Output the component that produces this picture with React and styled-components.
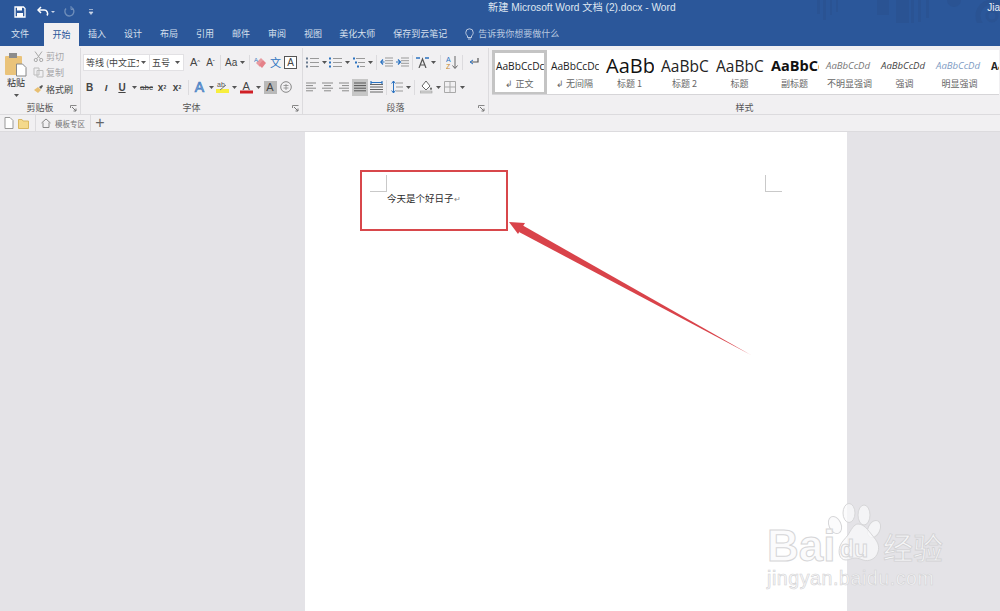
import React from "react";
import styled, { createGlobalStyle } from "styled-components";

const Global = createGlobalStyle`
  html, body { margin: 0; padding: 0; }
  body { font-family: "Liberation Sans", "Noto Sans CJK SC", sans-serif; overflow: hidden; }
`;

const CJK = `"Noto Sans CJK SC", "Liberation Sans", sans-serif`;

const Page = styled.div`
  position: relative;
  width: 1000px;
  height: 611px;
  display: flex;
  flex-direction: column;
  overflow: hidden;
  background: #e4e3e7;
`;

const TitleBar = styled.div`
  position: relative;
  height: 23px;
  display: flex;
  align-items: center;
  background: #2b579a;
  color: #dfe6f1;
`;

const Quick = styled.div`
  display: flex;
  align-items: center;
  padding-left: 14px;
  width: 300px;
`;

const Title = styled.div`
  position: absolute;
  left: 488px;
  top: 1px;
  font: 10.2px/14px "Liberation Sans", "Noto Sans CJK SC", sans-serif;
  white-space: nowrap;
`;

const UserName = styled.div`
  position: absolute;
  right: 0;
  top: 1px;
  font-size: 10px;
  line-height: 14px;
  color: #e8edf5;
`;

const Decor = styled.svg`
  position: absolute;
  right: 0;
  top: 0;
`;

const Tabs = styled.div`
  height: 23px;
  display: flex;
  align-items: center;
  background: #2b579a;
  padding-left: 11px;
  font: 9px/12px ${CJK};
  color: #d7e0ee;
`;

const Tab = styled.div`
  margin-left: ${(p) => p.$ml}px;
  margin-top: -2px;
  white-space: nowrap;
  ${(p) => p.$active && `
    background: #f1f0f2;
    color: #2b579a;
    height: 25px;
    margin-top: 0;
    width: 35px;
    display: flex;
    align-items: center;
    justify-content: center;
  `}
`;

const Tell = styled.div`
  margin-left: 18px;
  margin-top: -2px;
  display: flex;
  align-items: center;
  gap: 4px;
  color: #b9c9e0;
`;

const Ribbon = styled.div`
  height: 69px;
  display: flex;
  background: #f1f0f2;
  border-bottom: 1px solid #dcdbde;
  box-sizing: border-box;
  font-family: ${CJK};
  color: #444;
`;

const Group = styled.div`
  position: relative;
  width: ${(p) => p.$w}px;
  flex: none;
  display: flex;
  flex-direction: column;
  border-right: ${(p) => (p.$last ? "none" : "1px solid #dcdbde")};
  box-sizing: border-box;
  margin: 2px 0 0;
`;

const GroupBody = styled.div`
  height: 52px;
  display: flex;
  flex-direction: ${(p) => (p.$row ? "row" : "column")};
`;

const GroupLabel = styled.div`
  font-size: 9px;
  line-height: 12px;
  text-align: center;
  color: #555;
  padding-top: ${(p) => p.$top || 3}px;
`;

const Launcher = styled.svg`
  position: absolute;
  right: 3px;
  bottom: 2px;
`;

const PasteBtn = styled.div`
  width: 26px;
  padding: 4px 0 0 3px;
  display: flex;
  flex-direction: column;
  align-items: center;
  font-size: 9px;
  line-height: 12px;
  color: #333;
`;

const PasteCaret = styled.div`
  margin-top: 3px;
  line-height: 3px;
`;

const ClipList = styled.div`
  display: flex;
  flex-direction: column;
  padding-left: 4px;
`;

const ClipRow = styled.div`
  height: 16.5px;
  display: flex;
  align-items: center;
  gap: 2px;
  font-size: 9px;
  color: ${(p) => (p.$dim ? "#a5a5a8" : "#444")};
`;

const ToolRow = styled.div`
  display: flex;
  align-items: center;
  height: ${(p) => p.$h || 25}px;
  padding-left: ${(p) => p.$pl || 0}px;
`;

const FontSelect = styled.div`
  width: ${(p) => p.$w}px;
  height: 17px;
  box-sizing: border-box;
  background: #fff;
  border: 1px solid #e2e1e4;
  border-left-width: ${(p) => (p.$join ? 0 : 1)}px;
  display: flex;
  align-items: center;
  justify-content: space-between;
  padding: 0 3px 0 2px;
  font-size: 9px;
  color: #444;
  white-space: nowrap;
  overflow: hidden;
`;

const SelectText = styled.span`
  flex: 1;
  overflow: hidden;
  margin-right: 2px;
`;

const Tool = styled.div`
  width: ${(p) => p.$w || 16}px;
  height: 17px;
  flex: none;
  display: flex;
  align-items: center;
  justify-content: center;
  font-family: "Liberation Sans", sans-serif;
  font-size: ${(p) => p.$size || 10}px;
  font-weight: ${(p) => (p.$bold ? 700 : 400)};
  font-style: ${(p) => (p.$italic ? "italic" : "normal")};
  color: ${(p) => p.$color || "#444"};
  background: ${(p) => (p.$on ? "#c6c6c6" : "transparent")};
  white-space: nowrap;
`;

const Sep = styled.div`
  width: 1px;
  height: 15px;
  background: #dcdbde;
  margin: 0 ${(p) => p.$m || 3}px;
  flex: none;
`;

const FramedA = styled.div`
  width: 13px;
  height: 13px;
  box-sizing: border-box;
  border: 1px solid #555;
  background: #fff;
  font-size: 10px;
  line-height: 11px;
  text-align: center;
  color: #444;
`;

const ShadeA = styled.div`
  width: 13px;
  height: 13px;
  background: #b9b9b9;
  font-size: 11px;
  line-height: 13px;
  text-align: center;
  color: #444;
`;

const Gallery = styled.div`
  margin: 2px 0 0 3px;
  height: 46px;
  width: 507px;
  display: flex;
  background: #fff;
  border-bottom: 1px solid #d6d5d8;
  overflow: hidden;
`;

const StyleItem = styled.div`
  width: 55px;
  flex: none;
  box-sizing: border-box;
  height: 45px;
  border: ${(p) => (p.$sel ? "3px solid #c4c4c4" : "3px solid transparent")};
  display: flex;
  flex-direction: column;
  align-items: center;
  overflow: hidden;
`;

const Sample = styled.div`
  width: 49px;
  height: 25px;
  padding-left: 1px;
  box-sizing: border-box;
  display: flex;
  align-items: center;
  overflow: hidden;
  white-space: nowrap;
  font-family: "Open Sans", "Liberation Sans", sans-serif;
  font-size: ${(p) => p.$size || 10}px;
  font-weight: ${(p) => (p.$bold ? 700 : 400)};
  font-style: ${(p) => (p.$italic ? "italic" : "normal")};
  color: ${(p) => p.$color || "#222"};
`;

const StyleName = styled.div`
  font-size: 9px;
  line-height: 12px;
  color: #666;
  white-space: nowrap;
`;

const DocBar = styled.div`
  height: 17px;
  display: flex;
  align-items: center;
  background: #f1f0f2;
  border-bottom: 1px solid #dcdbde;
  box-sizing: border-box;
  padding-left: 4px;
  font-family: ${CJK};
`;

const FolderIcon = styled.svg`
  margin-left: 4px;
`;

const DocTab = styled.div`
  display: flex;
  align-items: center;
  gap: 4px;
  height: 16px;
  width: 56px;
  box-sizing: border-box;
  padding-left: 5px;
  margin-left: 6px;
  border-left: 1px solid #dcdbde;
  border-right: 1px solid #dcdbde;
  font-size: 7.5px;
  color: #777;
  white-space: nowrap;
`;

const Work = styled.div`
  flex: 1;
  display: flex;
  padding-left: 305px;
`;

const Sheet = styled.div`
  width: 542px;
  background: #fff;
  box-sizing: border-box;
  padding: 43px 65px 0;
  font-family: ${CJK};
`;

const Crops = styled.div`
  display: flex;
  justify-content: space-between;
`;

const Crop = styled.div`
  width: 16px;
  height: 16px;
  border-bottom: 1px solid #c9c9c9;
  ${(p) => (p.$right ? "border-left: 1px solid #c9c9c9;" : "border-right: 1px solid #c9c9c9;")}
`;

const Para = styled.div`
  margin: 0 0 0 17px;
  font-size: 9.5px;
  line-height: 13px;
  color: #2c2c2c;
`;

const ReturnMark = styled.span`
  color: #888;
  font-size: 8px;
`;

const RedBox = styled.div`
  position: absolute;
  left: 360px;
  top: 170px;
  width: 148px;
  height: 61px;
  box-sizing: border-box;
  border: 2px solid #d8474b;
`;

const Overlay = styled.svg`
  position: absolute;
  left: 0;
  top: 0;
  pointer-events: none;
`;

const Watermark = styled.div`
  position: absolute;
  left: 767px;
  top: 525px;
`;

const BaiRow = styled.div`
  display: flex;
  align-items: center;
  height: 42px;
`;

const BaiText = styled.div`
  width: 116px;
  font: 700 44px/42px "Liberation Sans", sans-serif;
  color: rgba(250, 250, 251, 0.75);
  -webkit-text-stroke: 1px #d6d6d8;
`;

const Jing = styled.div`
  font: 400 30px/42px ${CJK};
  color: rgba(250, 250, 251, 0.85);
  -webkit-text-stroke: 0.8px #d2d2d4;
`;

const Url = styled.div`
  font: 400 19.5px/22px "Liberation Sans", sans-serif;
  letter-spacing: 0.6px;
  color: rgba(250, 250, 251, 0.85);
  -webkit-text-stroke: 0.6px #d2d2d4;
`;

const Caret = ({ color = "#555" }) => (
  <svg width="5" height="3" viewBox="0 0 5 3"><path d="M0 0h5L2.5 3z" fill={color} /></svg>
);

const Lines = ({ kind }) => {
  // alignment glyphs, kind picks how the rows are cut
  const rows = {
    left: [[1, 11], [1, 8], [1, 11], [1, 8]],
    center: [[1, 12], [3, 10], [1, 12], [3, 10]],
    right: [[2, 12], [5, 12], [2, 12], [5, 12]],
    full: [[1, 13], [1, 13], [1, 13], [1, 13]],
  }[kind];
  return (
    <svg width="14" height="12" viewBox="0 0 14 12">
      {rows.map((r, i) => (
        <path key={i} d={`M${r[0]} ${2 + i * 2.6}H${r[1]}`} stroke={kind === "full" ? "#555" : "#8a8a8a"} />
      ))}
    </svg>
  );
};

const ListIcon = ({ color = "#2b72c0" }) => (
  <svg width="13" height="13" viewBox="0 0 13 13">
    <g fill={color}><rect x="0" y="1.5" width="2" height="2" /><rect x="0" y="5.5" width="2" height="2" /><rect x="0" y="9.5" width="2" height="2" /></g>
    <path d="M4 2.5h9M4 6.500h9M4 10.500h9" stroke="#999" />
  </svg>
);

const Launch = () => (
  <Launcher width="7" height="7" viewBox="0 0 7 7">
    <path d="M.5 3V.5H6.500" stroke="#888" fill="none" />
    <path d="M2 2l4 4M6 3.500V6H3.500" stroke="#777" fill="none" />
  </Launcher>
);

const styleItems = [
  { sample: "AaBbCcDc", name: "↲ 正文", size: 10.2, sel: true },
  { sample: "AaBbCcDc", name: "↲ 无间隔", size: 10.2 },
  { sample: "AaBbCc", name: "标题 1", size: 20, color: "#111" },
  { sample: "AaBbCc", name: "标题 2", size: 15.5 },
  { sample: "AaBbCc", name: "标题", size: 15.5 },
  { sample: "AaBbCc", name: "副标题", size: 14.5, bold: true, color: "#111" },
  { sample: "AaBbCcDd", name: "不明显强调", size: 9.6, italic: true, color: "#777" },
  { sample: "AaBbCcDd", name: "强调", size: 9.6, italic: true, color: "#444" },
  { sample: "AaBbCcDd", name: "明显强调", size: 9.6, italic: true, color: "#7e9cc4" },
  { sample: "Aa", name: "", size: 10, bold: true },
];

export default function App() {
  return (
    <Page>
      <Global />
      <TitleBar>
        <Decor width="190" height="23" viewBox="0 0 190 23">
          <g fill="#2a5393">
            <rect x="7" y="0" width="3" height="14" /><rect x="13" y="0" width="3" height="20" /><rect x="20" y="0" width="2" height="15" /><rect x="26" y="0" width="2" height="12" />
            <rect x="67" y="0" width="12" height="15" /><rect x="86" y="0" width="13" height="23" /><rect x="101" y="0" width="3" height="23" /><rect x="108" y="0" width="3" height="22" /><rect x="116" y="0" width="3" height="18" />
            <circle cx="144" cy="0" r="7" />
          </g>
          <circle cx="182" cy="16" r="14" fill="none" stroke="#2a5393" strokeWidth="5" />
          <circle cx="182" cy="16" r="5" fill="none" stroke="#2a5393" strokeWidth="3" />
        </Decor>
        <Quick>
          <svg width="12" height="12" viewBox="0 0 12 12"><path d="M1 1h8.500L11 2.500V11H1z" fill="none" stroke="#fff" strokeWidth="1.300" /><rect x="3" y="1" width="5" height="3.500" fill="#fff" /><rect x="3" y="7" width="6" height="4" fill="#fff" /></svg>
          <svg width="20" height="12" viewBox="0 0 20 12" style={{ marginLeft: 11 }}><path d="M4 1L1 4l3 3" fill="none" stroke="#fff" strokeWidth="1.500" /><path d="M1.500 4H7a3.500 3.500 0 0 1 3 5.500" fill="none" stroke="#fff" strokeWidth="1.500" /><path d="M14 5h4l-2 2z" fill="#cbd6e7" /></svg>
          <svg width="12" height="12" viewBox="0 0 12 12" style={{ marginLeft: 6 }}><path d="M8.500 1.500a4.500 4.500 0 1 1-5.500 1" fill="none" stroke="#6e8db9" strokeWidth="1.400" /><path d="M8 0v3.500h3" fill="none" stroke="#6e8db9" /></svg>
          <svg width="6" height="8" viewBox="0 0 6 8" style={{ marginLeft: 13 }}><path d="M1 1.500h4M1 4h4l-2 2.500L1 4" fill="#cbd6e7" stroke="#cbd6e7" strokeWidth=".7" /></svg>
        </Quick>
        <Title>新建 Microsoft Word 文档 (2).docx  -  Word</Title>
        <UserName>Jia</UserName>
      </TitleBar>

      <Tabs>
        <Tab>文件</Tab>
        <Tab $ml={15} $active>开始</Tab>
        <Tab $ml={9}>插入</Tab>
        <Tab $ml={18}>设计</Tab>
        <Tab $ml={18}>布局</Tab>
        <Tab $ml={18}>引用</Tab>
        <Tab $ml={18}>邮件</Tab>
        <Tab $ml={18}>审阅</Tab>
        <Tab $ml={18}>视图</Tab>
        <Tab $ml={17}>美化大师</Tab>
        <Tab $ml={18}>保存到云笔记</Tab>
        <Tell>
          <svg width="9" height="12" viewBox="0 0 9 12"><path d="M2.500 8C1.500 7 .8 6 .8 4.500a3.700 3.700 0 0 1 7.400 0C8.200 6 7.500 7 6.500 8v1.500h-4zM3 11h3" fill="none" stroke="#dfe6f1" strokeWidth=".8" /></svg>
          告诉我你想要做什么
        </Tell>
      </Tabs>

      <Ribbon>
        <Group $w={81}>
          <GroupBody $row>
            <PasteBtn>
              <svg width="22" height="25" viewBox="0 0 22 25">
                <rect x="0" y="4" width="17" height="19" rx="1" fill="#eac37a" />
                <rect x="4" y="1" width="8" height="5" fill="#8c8c8c" />
                <path d="M11.500 12h6l3.500 3.500V24h-9.500z" fill="#fff" stroke="#888" />
              </svg>
              <div>粘贴</div>
              <PasteCaret><Caret /></PasteCaret>
            </PasteBtn>
            <ClipList>
              <ClipRow $dim>
                <svg width="11" height="11" viewBox="0 0 11 11"><path d="M2 .5l5 7M9 .5l-5 7" stroke="#a8a8a8" fill="none" /><circle cx="2.800" cy="9" r="1.600" fill="none" stroke="#a8a8a8" /><circle cx="8.200" cy="9" r="1.600" fill="none" stroke="#a8a8a8" /></svg>
                剪切
              </ClipRow>
              <ClipRow $dim>
                <svg width="11" height="11" viewBox="0 0 11 11"><path d="M1 1h5v7H1zM4 3.500h6V10H4z" fill="#f1f0f2" stroke="#bdbdbd" /></svg>
                复制
              </ClipRow>
              <ClipRow>
                <svg width="11" height="11" viewBox="0 0 11 11"><path d="M1 6l4-3 3 3-3 3z" fill="#e8bf72" /><path d="M6 3l3-2 1 1-2 3z" fill="#555" /></svg>
                格式刷
              </ClipRow>
            </ClipList>
          </GroupBody>
          <GroupLabel>剪贴板</GroupLabel>
          <Launch />
        </Group>

        <Group $w={222}>
          <GroupBody>
            <ToolRow $h={28} $pl={2}>
              <FontSelect $w={67}><SelectText>等线 (中文正文)</SelectText><Caret /></FontSelect>
              <FontSelect $w={34} $join>五号<Caret /></FontSelect>
              <Tool $w={16} $size={11} style={{ marginLeft: 3 }}>A<sup style={{ fontSize: 6 }}>^</sup></Tool>
              <Tool $w={15} $size={10}>A<sup style={{ fontSize: 6 }}>ˇ</sup></Tool>
              <Sep $m={2} />
              <Tool $w={24} $size={10}>Aa&nbsp;<Caret /></Tool>
              <Sep $m={2} />
              <Tool $w={16}>
                <svg width="13" height="13" viewBox="0 0 13 13"><path d="M6 11L2 7l5-5 2 2z" fill="#e89aa0" /><path d="M8 12l4-5-3-3-4 5z" fill="#e58189" /><text x="0" y="6" fontSize="6" fill="#3d78bd">A</text></svg>
              </Tool>
              <Tool $w={15} $color="#2b72c0" style={{ fontFamily: CJK, fontSize: 11 }}>文</Tool>
              <Tool $w={15}><FramedA>A</FramedA></Tool>
            </ToolRow>
            <ToolRow $h={22} $pl={0}>
              <Tool $w={17} $bold>B</Tool>
              <Tool $w={16} $bold $italic $size={9.5}>I</Tool>
              <Tool $w={16} $bold style={{ textDecoration: "underline" }}>U</Tool>
              <Tool $w={8}><Caret /></Tool>
              <Tool $w={17} $size={8} style={{ textDecoration: "line-through" }}>abc</Tool>
              <Tool $w={14} $bold>x<sub style={{ fontSize: 5 }}>2</sub></Tool>
              <Tool $w={16} $bold>x<sup style={{ fontSize: 5 }}>2</sup></Tool>
              <Sep $m={3} />
              <Tool $w={15} $size={14} $color="#a9c7ea" style={{ WebkitTextStroke: "0.7px #3c78bf" }}>A</Tool>
              <Tool $w={8}><Caret /></Tool>
              <Tool $w={15}>
                <svg width="14" height="14" viewBox="0 0 14 14"><rect x="0" y="9" width="13" height="4" fill="#f7ee3e" /><text x="1" y="7" fontSize="7" fill="#555">ab</text><path d="M4 10l6-5" stroke="#777" /></svg>
              </Tool>
              <Tool $w={9}><Caret /></Tool>
              <Tool $w={15}>
                <svg width="14" height="14" viewBox="0 0 14 14"><text x="2.500" y="9.500" fontSize="11" fill="#444" fontFamily="Liberation Sans">A</text><rect x="0" y="10.500" width="13" height="3" fill="#d01f26" /></svg>
              </Tool>
              <Tool $w={9}><Caret /></Tool>
              <Tool $w={14}><ShadeA>A</ShadeA></Tool>
              <Tool $w={17}>
                <svg width="12" height="12" viewBox="0 0 12 12"><circle cx="6" cy="6" r="5.300" fill="none" stroke="#888" /><path d="M3.500 4.500h5M6 3v6M3.500 7h5" stroke="#888" fill="none" strokeWidth=".8" /></svg>
              </Tool>
            </ToolRow>
          </GroupBody>
          <GroupLabel>字体</GroupLabel>
          <Launch />
        </Group>

        <Group $w={186}>
          <GroupBody>
            <ToolRow $h={28} $pl={2}>
              <Tool $w={15}><ListIcon color="#6b7b8f" /></Tool>
              <Tool $w={8}><Caret /></Tool>
              <Tool $w={15}><ListIcon color="#2b72c0" /></Tool>
              <Tool $w={8}><Caret /></Tool>
              <Tool $w={15}>
                <svg width="13" height="13" viewBox="0 0 13 13"><path d="M4 2.500h9M6 6.500h7M8 10.500h5" stroke="#999" /><g fill="#2b72c0"><rect x="1" y="1.500" width="2" height="2" /><rect x="3" y="5.500" width="2" height="2" /><rect x="5" y="9.500" width="2" height="2" /></g></svg>
              </Tool>
              <Tool $w={8}><Caret /></Tool>
              <Sep $m={2} />
              <Tool $w={15}>
                <svg width="13" height="12" viewBox="0 0 13 12"><path d="M5 2h8M5 4.700h8M5 7.300h8M5 10h8" stroke="#999" /><path d="M4.500 6H1M3 3.500L.8 6 3 8.500" fill="none" stroke="#2b72c0" strokeWidth="1.200" /></svg>
              </Tool>
              <Tool $w={16}>
                <svg width="13" height="12" viewBox="0 0 13 12"><path d="M5 2h8M5 4.700h8M5 7.300h8M5 10h8" stroke="#999" /><path d="M0 6h4M2 3.500L4.500 6 2 8.500" fill="none" stroke="#2b72c0" strokeWidth="1.200" /></svg>
              </Tool>
              <Sep $m={2} />
              <Tool $w={15}>
                <svg width="13" height="12" viewBox="0 0 13 12"><path d="M3 12L6.500 3 10 12M4.200 9h4.600" fill="none" stroke="#555" strokeWidth="1.200" /><path d="M0 2h4M9 2h4" stroke="#2b72c0" strokeWidth="1.400" /></svg>
              </Tool>
              <Tool $w={6}><Caret /></Tool>
              <Sep $m={4} />
              <Tool $w={14}>
                <svg width="12" height="15" viewBox="0 0 12 15"><text x="0" y="6.500" fontSize="7" fill="#2b72c0">A</text><text x="0" y="14" fontSize="7" fill="#c98a2b">Z</text><path d="M9 1v12M6.500 10.500L9 13.500l2.500-3" fill="none" stroke="#666" /></svg>
              </Tool>
              <Sep $m={3} />
              <Tool $w={14}>
                <svg width="11" height="11" viewBox="0 0 11 11"><path d="M10 1v4H3" fill="none" stroke="#555" strokeWidth="1.200" /><path d="M5 3L2 5l3 2" fill="none" stroke="#2b72c0" /></svg>
              </Tool>
            </ToolRow>
            <ToolRow $h={22} $pl={1}>
              <Tool $w={16}><Lines kind="left" /></Tool>
              <Tool $w={16}><Lines kind="center" /></Tool>
              <Tool $w={16}><Lines kind="right" /></Tool>
              <Tool $w={16} $on><Lines kind="full" /></Tool>
              <Tool $w={16}>
                <svg width="13" height="12" viewBox="0 0 13 12"><path d="M0 3.500h13M0 6h13M0 8.500h13M0 11h13" stroke="#666" /><path d="M1 0v3M12 0v3M1 1.500h11" stroke="#2b72c0" strokeWidth="1.200" /></svg>
              </Tool>
              <Sep $m={2} />
              <Tool $w={16}>
                <svg width="12" height="14" viewBox="0 0 12 14"><path d="M5 3h7M5 7h7M5 11h7" stroke="#999" /><path d="M2.500 1v12M.6 3.500L2.500 1l1.900 2.500M.6 10.500L2.500 13l1.900-2.500" fill="none" stroke="#2b72c0" /></svg>
              </Tool>
              <Tool $w={7}><Caret /></Tool>
              <Sep $m={2} />
              <Tool $w={18}>
                <svg width="13" height="14" viewBox="0 0 13 14"><path d="M6 1l4 5-4 4-4-4z" fill="#fff" stroke="#666" /><path d="M11 7l1 2-1 1-1-1z" fill="#444" /><rect x="0" y="11" width="12" height="2" fill="#d8d8d8" stroke="#8a8a8a" strokeWidth=".5" /></svg>
              </Tool>
              <Tool $w={6}><Caret /></Tool>
              <Tool $w={18}>
                <svg width="12" height="12" viewBox="0 0 12 12"><path d="M.5.500h11v11H.5zM6 .5v11M.5 6h11" fill="none" stroke="#a9a9a9" /></svg>
              </Tool>
              <Tool $w={6}><Caret /></Tool>
            </ToolRow>
          </GroupBody>
          <GroupLabel>段落</GroupLabel>
          <Launch />
        </Group>

        <Group $w={511} $last>
          <Gallery>
            {styleItems.map((it, i) => (
              <StyleItem key={i} $sel={it.sel}>
                <Sample $size={it.size} $bold={it.bold} $italic={it.italic} $color={it.color}>{it.sample}</Sample>
                <StyleName>{it.name}</StyleName>
              </StyleItem>
            ))}
          </Gallery>
          <GroupLabel $top={7}>样式</GroupLabel>
        </Group>
      </Ribbon>

      <DocBar>
        <svg width="10" height="12" viewBox="0 0 10 12"><path d="M1 .5h5l3 3v8H1z" fill="#fff" stroke="#999" /></svg>
        <FolderIcon width="11" height="11" viewBox="0 0 11 11"><path d="M.5 1.500h3.500l1 1.500h5.500v7.500H.5z" fill="#f4d98b" stroke="#d9b860" /></FolderIcon>
        <DocTab>
          <svg width="10" height="10" viewBox="0 0 10 10"><path d="M.5 5L5 1l4.500 4M2 4.500v5h6v-5" fill="none" stroke="#888" /></svg>
          模板专区
        </DocTab>
        <Tool $w={18} $size={16} $color="#666">+</Tool>
      </DocBar>

      <Work>
        <Sheet>
          <Crops>
            <Crop />
            <Crop $right />
          </Crops>
          <Para>今天是个好日子<ReturnMark>↵</ReturnMark></Para>
        </Sheet>
      </Work>

      <RedBox />
      <Overlay width="1000" height="611" viewBox="0 0 1000 611">
        <path d="M751 355L519 232l3-7z" fill="#d9434a" />
        <path d="M509 222l16 1-7 11z" fill="#d9434a" />
        <g fill="#fafafb" fillOpacity=".75" stroke="#d6d6d8">
          <ellipse cx="835" cy="525" rx="6" ry="9" transform="rotate(-25 835 525)" />
          <ellipse cx="849" cy="513" rx="6" ry="9.500" />
          <ellipse cx="864" cy="515" rx="6" ry="10" />
          <ellipse cx="874" cy="529" rx="6" ry="9" transform="rotate(25 874 529)" />
          <path d="M858 524c6 0 10 6 14 11 5 6 8 10 6 17-2 7-9 10-15 8-3-1-5-2-8-2s-6 2-9 2c-7 0-8-8-6-14 2-5 5-7 8-11 3-5 6-11 10-11z" />
          <text x="840" y="557" fontSize="23" fontWeight="700" fontFamily="Liberation Sans">du</text>
        </g>
      </Overlay>
      <Watermark>
        <BaiRow>
          <BaiText>Bai</BaiText>
          <Jing>经验</Jing>
        </BaiRow>
        <Url>jingyan.baidu.com</Url>
      </Watermark>
    </Page>
  );
}
